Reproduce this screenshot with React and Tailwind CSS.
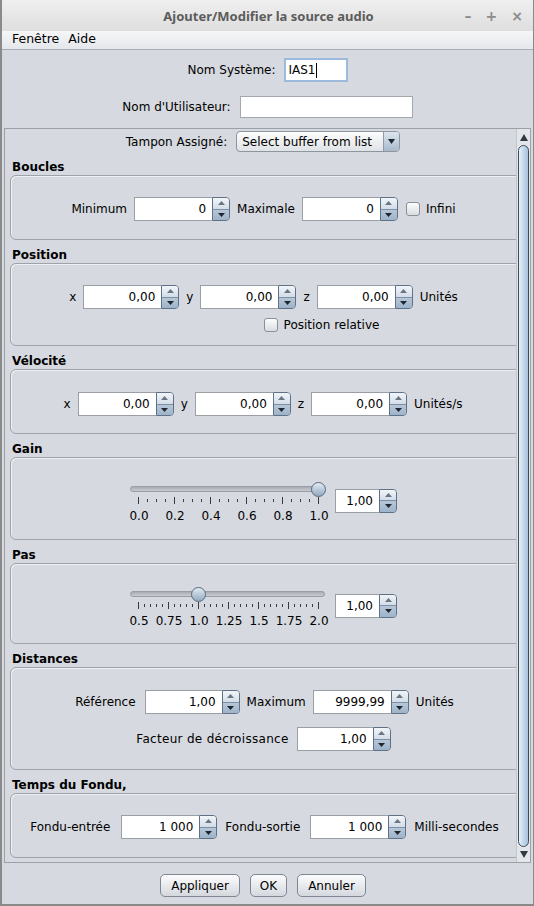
import React from 'react'

const Arrows = () => (
  <div className="flex flex-col w-[18px] h-full border border-[#5f7187] rounded-r-[4px] overflow-hidden">
    <div className="flex-1 flex items-center justify-center bg-gradient-to-b from-[#f1f5f9] to-[#d3dde8] border-b border-[#7d8fa3]">
      <svg width="7" height="4" viewBox="0 0 7 4"><path d="M3.5 0 L7 4 L0 4 Z" fill="#6b7480" /></svg>
    </div>
    <div className="flex-1 flex items-center justify-center bg-gradient-to-b from-[#b7c7d8] to-[#9eb3c9]">
      <svg width="7" height="4" viewBox="0 0 7 4"><path d="M0 0 L7 0 L3.5 4 Z" fill="#1f2630" /></svg>
    </div>
  </div>
)

const Spinner = ({ value, field = 'w-[78px]' }) => (
  <div className="flex h-[24px]">
    <div className={`${field} h-full bg-white border border-[#9a9fa6] border-r-0 flex items-center justify-end pr-[6px]`}>
      {value}
    </div>
    <Arrows />
  </div>
)

const Checkbox = () => (
  <div className="w-[14px] h-[14px] rounded-[3px] border border-[#8c9096] bg-gradient-to-b from-[#fdfdfd] to-[#dadde2]" />
)

const Group = ({ title, pad, children }) => (
  <div className="flex flex-col">
    <div className="h-[16px] leading-[16px] font-bold pl-[7px]">{title}</div>
    <div className={`ml-[5px] w-[511px] rounded-[6px] border border-[#9ea2a9] shadow-[inset_1px_1px_0_#eef0f3] flex flex-col items-center ${pad}`}>
      {children}
    </div>
  </div>
)

const Slider = ({ labels, step, minor, thumb }) => {
  const ticks = []
  const last = 14 + step * (labels.length - 1)
  for (let x = 14; x <= last + 0.1; x += step / minor) {
    const major = Math.abs(((x - 14) / step) - Math.round((x - 14) / step)) < 0.01
    ticks.push(<line key={x} x1={Math.round(x) + 0.5} x2={Math.round(x) + 0.5} y1={major ? 0 : 2} y2={major ? 7 : 5} stroke="#3a3a3a" strokeWidth="1" />)
  }
  return (
    <div className="relative w-[204px] h-[43px]">
      <div className="absolute left-[6px] top-[5px] w-[195px] h-[6px] rounded-full bg-gradient-to-b from-[#a9adb3] to-[#c9ccd1] border border-[#9a9ea4]" />
      <div
        className="absolute top-[1px] w-[15px] h-[15px] -ml-[7px] rounded-full border border-[#566a80] bg-gradient-to-b from-[#e3ebf3] to-[#93a9c0]"
        style={{ left: thumb }}
      />
      <svg className="absolute left-0 top-[16px]" width="204" height="8">{ticks}</svg>
      {labels.map((l, i) => (
        <span
          key={l}
          className="absolute top-[28px] -translate-x-1/2 leading-[15px] whitespace-nowrap"
          style={{ left: 14 + step * i + 1 }}
        >
          {l}
        </span>
      ))}
    </div>
  )
}

const Button = ({ label, w }) => (
  <div className={`${w} h-[23px] rounded-[5px] border border-[#7f8794] bg-gradient-to-b from-[#fcfcfd] to-[#d4d8de] flex items-center justify-center`}>
    {label}
  </div>
)

export default function App() {
  return (
    <div className="w-[534px] h-[906px] overflow-hidden bg-[#d6d9df] font-['DejaVu_Sans',sans-serif] text-[12px] text-black flex flex-col border-l-2 border-r border-b-2 border-[#8a8a8a]">
      {/* title bar */}
      <div className="h-[31px] shrink-0 bg-gradient-to-b from-[#efefef] to-[#dedede] flex items-center relative pt-[2px]">
        <div className="flex-1 text-center font-bold text-[13px] text-[#5c5c5c] font-['Noto_Sans',sans-serif] pl-[2px]">Ajouter/Modifier la source audio</div>
        <div className="absolute right-[10px] top-[6px] flex gap-[14px] text-[#8c8c8c] text-[14px] font-bold">
          <span>–</span>
          <span>+</span>
          <span>×</span>
        </div>
      </div>

      {/* menu bar */}
      <div className="h-[19px] shrink-0 bg-gradient-to-b from-[#f6f6f7] to-[#e4e7eb] border-b border-[#a9aeb6] flex items-center gap-[9px] pl-[10px] pb-[2px] leading-none text-[12.5px]">
        <span>Fenêtre</span>
        <span>Aide</span>
      </div>

      {/* name fields */}
      <div className="flex items-center justify-center gap-[8px] mt-[8px] h-[24px]">
        <span>Nom Système:</span>
        <div className="w-[64px] h-[24px] bg-white border-2 border-[#9cbadc] flex items-center pl-[3px]">
          IAS1<span className="w-px h-[15px] bg-black" />
        </div>
      </div>
      <div className="flex items-center justify-center gap-[9px] mt-[14px] h-[22px]">
        <span>Nom d'Utilisateur:</span>
        <div className="w-[173px] h-[22px] bg-white border border-[#a3a8ae]" />
      </div>

      {/* scroll pane */}
      <div className="mt-[10px] ml-[2px] w-[527px] h-[735px] border border-[#9ca1a8] flex">
        <div className="w-[511px] h-full overflow-hidden">
          <div className="w-[516px] flex flex-col gap-[7px]">
            <div className="flex items-center justify-center gap-[9px] mt-[2px] h-[21px]">
              <span>Tampon Assigné:</span>
              <div className="w-[164px] h-[21px] rounded-[4px] border border-[#8e959e] bg-gradient-to-b from-[#fdfdfd] to-[#dfe2e6] flex items-center overflow-hidden">
                <span className="flex-1 pl-[5px] whitespace-nowrap">Select buffer from list</span>
                <div className="w-[16px] h-full border-l border-[#8e9aa8] bg-gradient-to-b from-[#dde6ef] to-[#a7b9cc] flex items-center justify-center">
                  <svg width="7" height="5" viewBox="0 0 7 5"><path d="M0 0 L7 0 L3.5 5 Z" fill="#1f2630" /></svg>
                </div>
              </div>
            </div>

            <Group title="Boucles" pad="pt-[21px] pb-[18px]">
              <div className="flex items-center gap-[7px] mr-[4px]">
                <span>Minimum</span>
                <Spinner value="0" />
                <span>Maximale</span>
                <Spinner value="0" />
                <div className="flex items-center gap-[6px] ml-[1px]">
                  <Checkbox />
                  <span>Infini</span>
                </div>
              </div>
            </Group>

            <Group title="Position" pad="pt-[21px] pb-[12px]">
              <div className="flex items-center gap-[7px] mr-[4px]">
                <span>x</span>
                <Spinner value="0,00" />
                <span>y</span>
                <Spinner value="0,00" />
                <span>z</span>
                <Spinner value="0,00" />
                <span>Unités</span>
              </div>
              <div className="flex items-center gap-[6px] h-[16px] mt-[8px] ml-[112px]">
                <Checkbox />
                <span>Position relative</span>
              </div>
            </Group>

            <Group title="Vélocité" pad="pt-[22px] pb-[17px]">
              <div className="flex items-center gap-[7px] mr-[5px]">
                <span>x</span>
                <Spinner value="0,00" />
                <span>y</span>
                <Spinner value="0,00" />
                <span>z</span>
                <Spinner value="0,00" />
                <span>Unités/s</span>
              </div>
            </Group>

            <Group title="Gain" pad="pt-[23px] pb-[15px]">
              <div className="flex items-center gap-[7px] mr-[10px]">
                <Slider labels={['0.0', '0.2', '0.4', '0.6', '0.8', '1.0']} step={36} minor={4} thumb={194} />
                <div className="-mt-[4px]">
                  <Spinner value="1,00" field="w-[44px]" />
                </div>
              </div>
            </Group>

            <Group title="Pas" pad="pt-[22px] pb-[14px]">
              <div className="flex items-center gap-[7px] mr-[10px]">
                <Slider labels={['0.5', '0.75', '1.0', '1.25', '1.5', '1.75', '2.0']} step={30} minor={5} thumb={74} />
                <div className="-mt-[4px]">
                  <Spinner value="1,00" field="w-[44px]" />
                </div>
              </div>
            </Group>

            <Group title="Distances" pad="pt-[22px] pb-[18px]">
              <div className="flex items-center gap-[7px] mr-[2px]">
                <span className="mr-[2px]">Référence</span>
                <Spinner value="1,00" field="w-[77px]" />
                <span>Maximum</span>
                <Spinner value="9999,99" />
                <span>Unités</span>
              </div>
              <div className="flex items-center gap-[8px] mt-[13px] mr-[4px]">
                <span className="tracking-[0.3px]">Facteur de décroissance</span>
                <Spinner value="1,00" field="w-[76px]" />
              </div>
            </Group>

            <Group title="Temps du Fondu," pad="pt-[21px] pb-[18px]">
              <div className="flex items-center gap-[8px] mr-[2px]">
                <span className="mr-[3px]">Fondu-entrée</span>
                <Spinner value="1 000" />
                <span className="mr-[2px]">Fondu-sortie</span>
                <Spinner value="1 000" />
                <span>Milli-secondes</span>
              </div>
            </Group>
          </div>
        </div>

        {/* scrollbar */}
        <div className="w-[14px] h-full flex flex-col bg-[#e2e5e9] border-l border-[#c3c7cd]">
          <div className="h-[16px] flex items-center justify-center">
            <svg width="8" height="7" viewBox="0 0 8 7"><path d="M4 0 L8 7 L0 7 Z" fill="#303840" /></svg>
          </div>
          <div className="flex-1 mx-px rounded-[7px] border border-[#3f4a57] bg-gradient-to-r from-[#eaf2f9] via-[#c3d8ea] to-[#a8c3db]" />
          <div className="h-[15px] flex items-center justify-center">
            <svg width="8" height="7" viewBox="0 0 8 7"><path d="M0 0 L8 0 L4 7 Z" fill="#303840" /></svg>
          </div>
        </div>
      </div>

      {/* buttons */}
      <div className="flex justify-center gap-[10px] mt-[11px] pr-[9px]">
        <Button label="Appliquer" w="w-[80px]" />
        <Button label="OK" w="w-[37px]" />
        <Button label="Annuler" w="w-[69px]" />
      </div>
    </div>
  )
}
